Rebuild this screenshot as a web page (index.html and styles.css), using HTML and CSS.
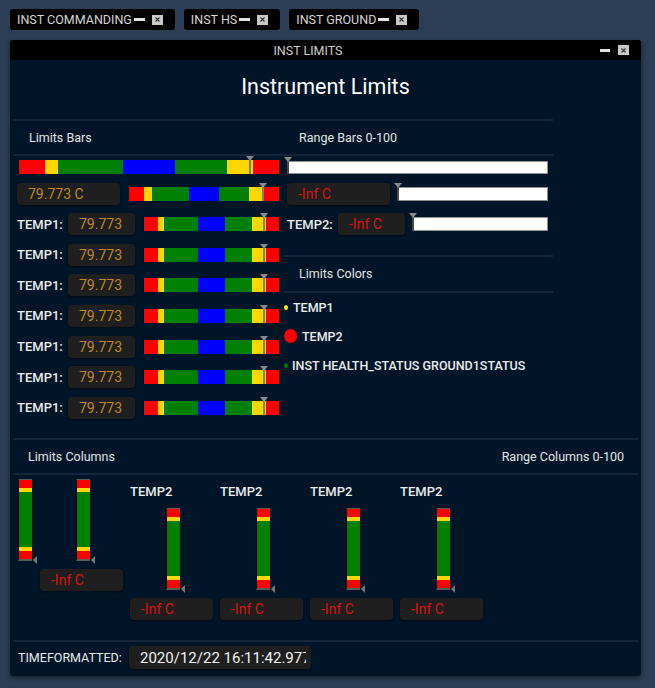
FILE: index.html
```html
<!DOCTYPE html>
<html>
<head>
<meta charset="utf-8">
<link rel="stylesheet" href="styles.css">
</head>
<body>
<div class="tabs">
  <div class="tab"><span class="tab-name">INST COMMANDING</span><span class="dash"></span><span class="xbox"><svg width="5" height="5" viewBox="0 0 5 5"><path d="M0.5 0.5L4.5 4.5M4.5 0.5L0.5 4.5" stroke="#333" stroke-width="1.1"/></svg></span></div>
  <div class="tab"><span class="tab-name">INST HS</span><span class="dash"></span><span class="xbox"><svg width="5" height="5" viewBox="0 0 5 5"><path d="M0.5 0.5L4.5 4.5M4.5 0.5L0.5 4.5" stroke="#333" stroke-width="1.1"/></svg></span></div>
  <div class="tab"><span class="tab-name">INST GROUND</span><span class="dash"></span><span class="xbox"><svg width="5" height="5" viewBox="0 0 5 5"><path d="M0.5 0.5L4.5 4.5M4.5 0.5L0.5 4.5" stroke="#333" stroke-width="1.1"/></svg></span></div>
</div>

<div class="window">
  <div class="titlebar">
    <div class="wtitle">INST LIMITS</div>
    <div class="wbtns"><span class="dash"></span><span class="xbox"><svg width="5" height="5" viewBox="0 0 5 5"><path d="M0.5 0.5L4.5 4.5M4.5 0.5L0.5 4.5" stroke="#333" stroke-width="1.1"/></svg></span></div>
  </div>
  <div class="wbody">
    <h1 class="heading">Instrument Limits</h1>

    <div class="top">
      <div class="col lcol">
        <div class="sechead">Limits Bars</div>
        <div class="lbody">
          <div class="bar bar1">
            <span class="s r10"></span><span class="s y5"></span><span class="s g25"></span><span class="s b20"></span><span class="s g20"></span><span class="s y10"></span><span class="s r10"></span>
            <span class="ind" style="left:88.9%"></span>
          </div>
          <div class="row">
            <div class="vbox wide warn">79.773 C</div>
            <div class="bar grow">
              <span class="s r10"></span><span class="s y5"></span><span class="s g25"></span><span class="s b20"></span><span class="s g20"></span><span class="s y10"></span><span class="s r10"></span>
              <span class="ind" style="left:89.4%"></span>
            </div>
          </div>
          <div class="row">
            <div class="label">TEMP1:</div><div class="vbox warn">79.773</div>
            <div class="bar grow"><span class="s r10"></span><span class="s y5"></span><span class="s g25"></span><span class="s b20"></span><span class="s g20"></span><span class="s y10"></span><span class="s r10"></span><span class="ind" style="left:89%"></span></div>
          </div>
          <div class="row">
            <div class="label">TEMP1:</div><div class="vbox warn">79.773</div>
            <div class="bar grow"><span class="s r10"></span><span class="s y5"></span><span class="s g25"></span><span class="s b20"></span><span class="s g20"></span><span class="s y10"></span><span class="s r10"></span><span class="ind" style="left:89%"></span></div>
          </div>
          <div class="row">
            <div class="label">TEMP1:</div><div class="vbox warn">79.773</div>
            <div class="bar grow"><span class="s r10"></span><span class="s y5"></span><span class="s g25"></span><span class="s b20"></span><span class="s g20"></span><span class="s y10"></span><span class="s r10"></span><span class="ind" style="left:89%"></span></div>
          </div>
          <div class="row">
            <div class="label">TEMP1:</div><div class="vbox warn">79.773</div>
            <div class="bar grow"><span class="s r10"></span><span class="s y5"></span><span class="s g25"></span><span class="s b20"></span><span class="s g20"></span><span class="s y10"></span><span class="s r10"></span><span class="ind" style="left:89%"></span></div>
          </div>
          <div class="row">
            <div class="label">TEMP1:</div><div class="vbox warn">79.773</div>
            <div class="bar grow"><span class="s r10"></span><span class="s y5"></span><span class="s g25"></span><span class="s b20"></span><span class="s g20"></span><span class="s y10"></span><span class="s r10"></span><span class="ind" style="left:89%"></span></div>
          </div>
          <div class="row">
            <div class="label">TEMP1:</div><div class="vbox warn">79.773</div>
            <div class="bar grow"><span class="s r10"></span><span class="s y5"></span><span class="s g25"></span><span class="s b20"></span><span class="s g20"></span><span class="s y10"></span><span class="s r10"></span><span class="ind" style="left:89%"></span></div>
          </div>
          <div class="row">
            <div class="label">TEMP1:</div><div class="vbox warn">79.773</div>
            <div class="bar grow"><span class="s r10"></span><span class="s y5"></span><span class="s g25"></span><span class="s b20"></span><span class="s g20"></span><span class="s y10"></span><span class="s r10"></span><span class="ind" style="left:89%"></span></div>
          </div>
        </div>
      </div>

      <div class="col rcol">
        <div class="sechead">Range Bars 0-100</div>
        <div class="rbody">
          <div class="rbar rbar1"><span class="ind dark" style="left:0%"></span></div>
          <div class="row">
            <div class="vbox wide bad">-Inf C</div>
            <div class="rbar grow"><span class="ind dark" style="left:0%"></span></div>
          </div>
          <div class="row">
            <div class="label">TEMP2:</div><div class="vbox bad">-Inf C</div>
            <div class="rbar grow"><span class="ind dark" style="left:0%"></span></div>
          </div>
        </div>
        <div class="sechead lchead">Limits Colors</div>
        <div class="lclist">
          <div class="lcrow"><span class="dot yellow"></span><span class="lctext">TEMP1</span></div>
          <div class="lcrow"><span class="dot big red"></span><span class="lctext">TEMP2</span></div>
          <div class="lcrow"><span class="dot green"></span><span class="lctext">INST HEALTH_STATUS GROUND1STATUS</span></div>
        </div>
      </div>
    </div>

    <div class="sechead wide"><span>Limits Columns</span><span>Range Columns 0-100</span></div>

    <div class="colsarea">
      <div class="cgroup single">
        <div class="column"><span class="s r10"></span><span class="s y5"></span><span class="s g70"></span><span class="s y5"></span><span class="s r10"></span></div>
      </div>
      <div class="cgroup">
        <div class="column"><span class="s r10"></span><span class="s y5"></span><span class="s g70"></span><span class="s y5"></span><span class="s r10"></span></div>
        <div class="vbox bad cbox">-Inf C</div>
      </div>
      <div class="cgroup">
        <div class="clabel">TEMP2</div>
        <div class="column"><span class="s r10"></span><span class="s y5"></span><span class="s g70"></span><span class="s y5"></span><span class="s r10"></span></div>
        <div class="vbox bad cbox">-Inf C</div>
      </div>
      <div class="cgroup">
        <div class="clabel">TEMP2</div>
        <div class="column"><span class="s r10"></span><span class="s y5"></span><span class="s g70"></span><span class="s y5"></span><span class="s r10"></span></div>
        <div class="vbox bad cbox">-Inf C</div>
      </div>
      <div class="cgroup">
        <div class="clabel">TEMP2</div>
        <div class="column"><span class="s r10"></span><span class="s y5"></span><span class="s g70"></span><span class="s y5"></span><span class="s r10"></span></div>
        <div class="vbox bad cbox">-Inf C</div>
      </div>
      <div class="cgroup">
        <div class="clabel">TEMP2</div>
        <div class="column"><span class="s r10"></span><span class="s y5"></span><span class="s g70"></span><span class="s y5"></span><span class="s r10"></span></div>
        <div class="vbox bad cbox">-Inf C</div>
      </div>
    </div>

    <div class="footer">
      <div class="tlabel">TIMEFORMATTED:</div>
      <div class="tbox"><span class="tval">2020/12/22 16:11:42.977</span></div>
    </div>
  </div>
</div>
</body>
</html>
```

FILE: styles.css
```css
* { box-sizing: border-box; }
html, body { margin: 0; padding: 0; }
body {
  background: #2b3e55;
  font-family: Roboto, "Liberation Sans", sans-serif;
  color: #e8e8e8;
  width: 655px;
  height: 688px;
  overflow: hidden;
}

/* tabs */
.tabs { display: flex; gap: 9px; padding: 9px 0 0 10px; height: 40px; }
.tab {
  height: 21px; background: #000; border-radius: 3px;
  display: flex; align-items: center;
  padding: 0 12px 0 7px;
  font-size: 12.5px; color: #d6d6d6;
}
.dash { display: block; width: 11px; height: 3px; background: #e2e2e2; margin-left: 2px; }
.xbox {
  width: 11px; height: 10px; background: #c9c9c9; margin-left: 7px;
  display: flex; align-items: center; justify-content: center;
}
.xbox svg { display: block; }

/* window */
.window {
  margin-left: 10px; width: 631px; height: 636px;
  background: #011528; border-radius: 3px; overflow: hidden;
  box-shadow: 0 2px 5px rgba(0,0,0,.45);
  display: flex; flex-direction: column;
}
.titlebar { height: 20px; flex: none; background: #000; display: flex; align-items: center; }
.wtitle { flex: 1; text-align: center; font-size: 12.5px; color: #cccccc; padding-left: 6px; }
.wbtns { display: flex; align-items: center; padding-right: 12px; }
.wbtns .dash { width: 10px; margin-left: 0; }
.wbtns .xbox { margin-left: 8px; }

.wbody { flex: 1; padding: 0 3px; display: flex; flex-direction: column; }
.heading {
  margin: 0; padding: 14px 0 20px;
  font-size: 21.5px; line-height: 25px; font-weight: 400;
  text-align: center; color: #fff;
}

.top { display: flex; height: 318.5px; flex: none; }
.col { display: flex; flex-direction: column; }
.lcol { width: 271px; }
.rcol { width: 269px; }

.sechead {
  height: 37px; flex: none;
  border-top: 2px solid #15263a; border-bottom: 2px solid #15263a;
  display: flex; align-items: center;
  padding-left: 16px;
  font-size: 12.5px; color: #e4e4e4;
}
.rcol .sechead { padding-left: 15px; }
.rcol .lchead { margin-top: 20px; height: 37.5px; }
.sechead.wide { justify-content: space-between; padding: 0 14px 0 15px; }

.lbody { padding: 4px 5px 0 4px; display: flex; flex-direction: column; gap: 8.6px; }
.rbody { padding: 5px 5px 0 3px; display: flex; flex-direction: column; gap: 8.6px; }

.row { height: 22px; display: flex; align-items: center; }
.label { width: 51px; flex: none; font-size: 13px; font-weight: 500; color: #ececec; white-space: nowrap; }

.vbox {
  height: 22px; width: 67px; flex: none;
  background: #1f1f1f; border-radius: 4px;
  box-shadow: 0 1px 2px rgba(0,0,0,.5);
  display: flex; align-items: center;
  padding-left: 11px;
  font-size: 14px; white-space: nowrap; overflow: hidden;
}
.vbox.wide { width: 103px; }
.warn { color: #bf8a1c; }
.bad { color: #d81414; }

/* limits bars */
.bar {
  position: relative; height: 14px; display: flex;
  border-left: 1px solid #000;
}
.bar1 { margin-left: 1px; }
.grow { flex: 1; margin-left: 8px; }
.s { display: block; }
.bar .s { height: 100%; }
.r10 { flex: 0 0 10%; background: #ff0000; }
.y5 { flex: 0 0 5%; background: #ffd700; }
.y10 { flex: 0 0 10%; background: #ffd700; }
.g25 { flex: 0 0 25%; background: #008000; }
.g20 { flex: 0 0 20%; background: #008000; }
.g70 { flex: 0 0 70%; background: #008000; }
.b20 { flex: 0 0 20%; background: #0000ff; }

.ind {
  position: absolute; top: -3px; bottom: 0;
  width: 2px; margin-left: -1px; background: #808080;
}
.ind::before {
  content: ""; position: absolute; top: -1px; left: -3px;
  border-left: 4px solid transparent; border-right: 4px solid transparent;
  border-top: 5px solid #8a8a8a;
}
.ind.dark { background: #4a4a4a; top: -4px; bottom: -1px; }

/* range bars */
.rbar {
  position: relative; height: 14px; background: #fff;
  border: 1px solid #8e8e8e; border-left: none;
}
.rbar1 { margin-left: 1px; height: 13px; }

/* limits colors */
.lclist { display: flex; flex-direction: column; }
.lcrow { height: 29px; display: flex; align-items: center; }
.dot { width: 4px; height: 5px; border-radius: 50%; margin-right: 5px; flex: none; }
.dot.big { width: 13px; height: 14px; }
.yellow { background: #ffee00; }
.red { background: #ff0000; }
.green { background: #007a00; margin-right: 4px; }
.lctext { font-size: 12.5px; font-weight: 500; color: #ececec; }

/* columns */
.colsarea {
  height: 165.5px; flex: none;
  display: flex; gap: 7px; align-items: flex-start;
  padding: 4.5px 0 0 5px;
}
.cgroup { width: 83px; display: flex; flex-direction: column; }
.cgroup.single { width: 15px; }
.column {
  position: relative; width: 14px; height: 82px;
  border-left: 1px solid #000;
  border-top: 1px solid #5c5c5c; border-bottom: 2px solid #5c5c5c;
  display: flex; flex-direction: column;
  margin-left: 36px;
}
.single .column { margin-left: 0; }
.column::after {
  content: ""; position: absolute; right: -5px; bottom: -5px;
  border-top: 4px solid transparent; border-bottom: 4px solid transparent;
  border-right: 4px solid #7a7a7a;
}
.column .s { width: 100%; }
.clabel { margin-top: 5px; height: 16px; line-height: 16px; font-size: 13px; font-weight: 500; color: #ececec; }
.clabel + .column { margin-top: 8px; }
.cbox { width: 83px; margin-top: 8px; }

/* footer */
.footer {
  flex: none; border-top: 2px solid #15263a;
  padding: 4px 0 7px 5px;
  display: flex; align-items: center;
}
.tlabel { width: 111px; font-size: 12.5px; color: #e8e8e8; }
.tbox {
  width: 182px; height: 23px; background: #1f1f1f; border-radius: 4px;
  box-shadow: 0 1px 2px rgba(0,0,0,.5);
  display: flex; align-items: center; padding: 0 5px 0 11px;
  font-size: 15px; font-weight: 400; color: #f2f2f2;
}
.tval { display: block; white-space: nowrap; overflow: hidden; width: 100%; }
```
